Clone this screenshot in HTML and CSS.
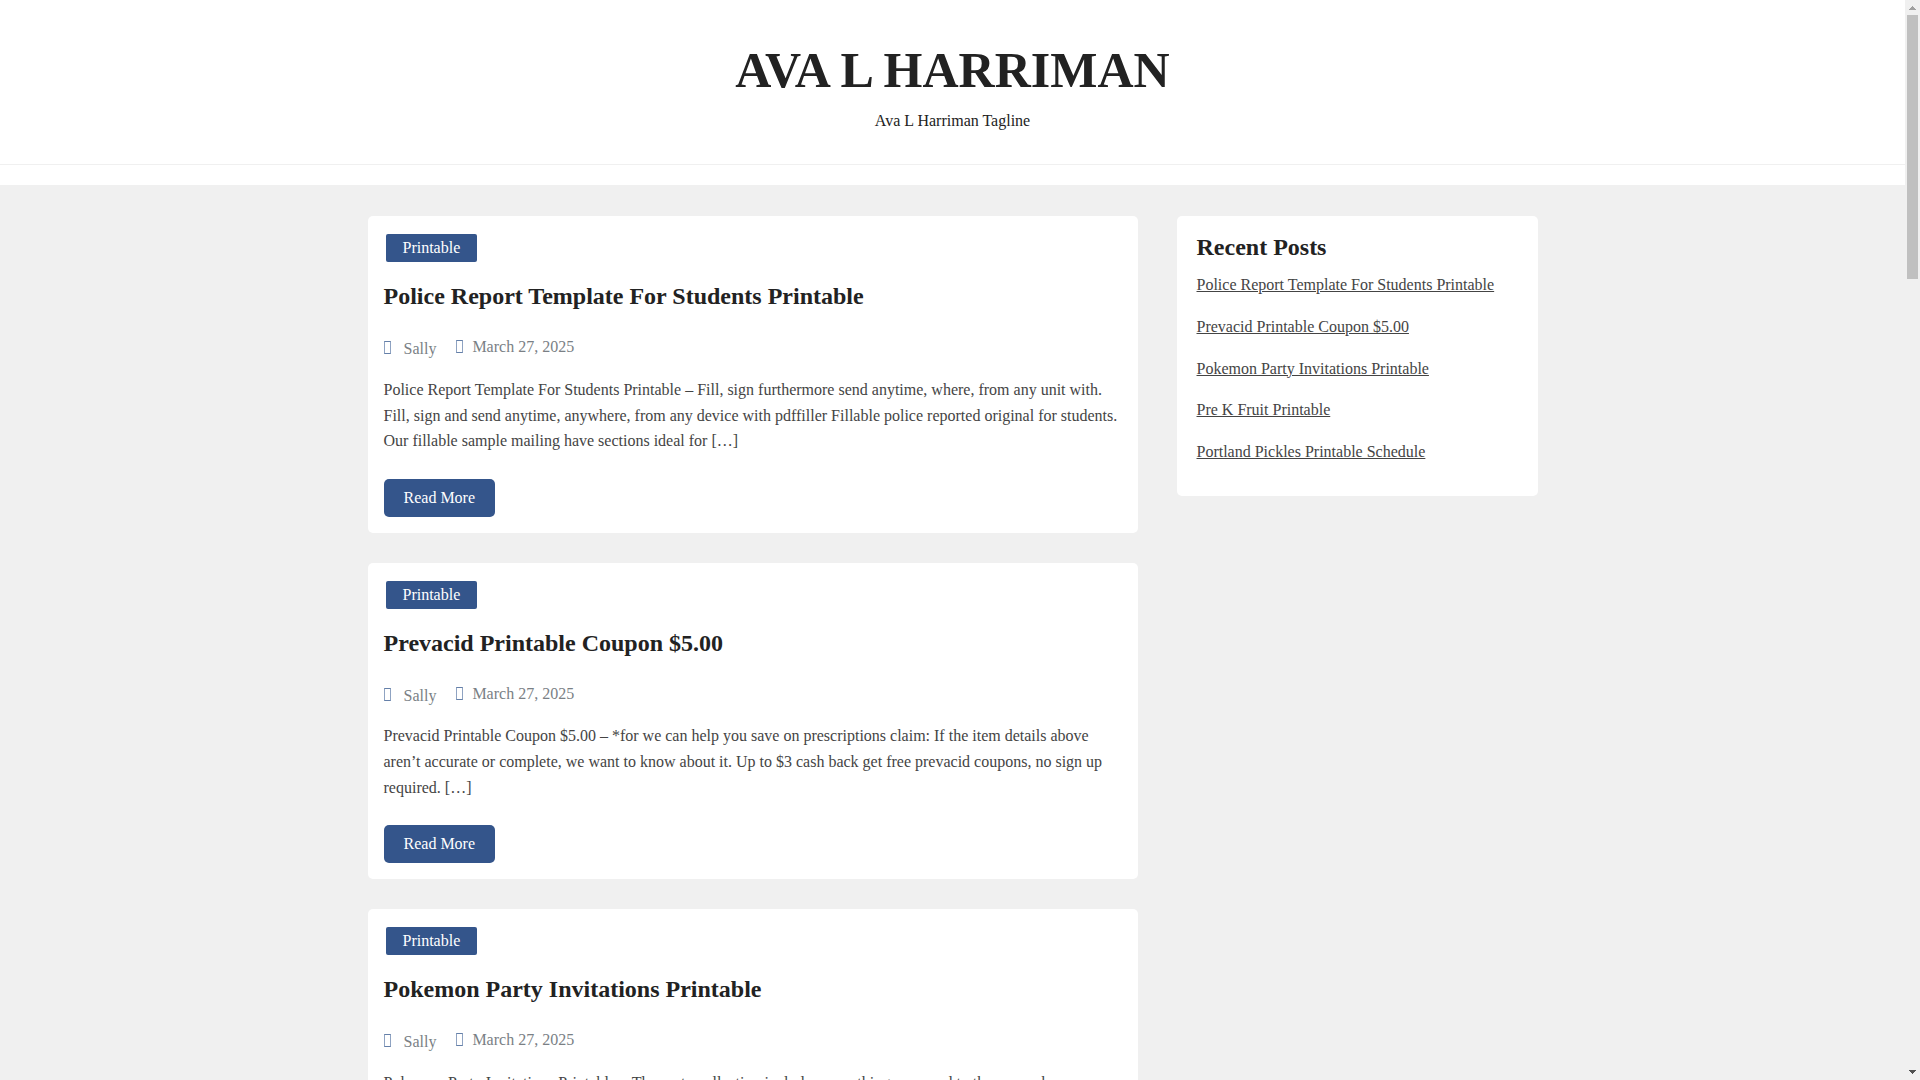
FILE: index.html
```html
<!DOCTYPE html>
<html lang="en">
<head>
<meta charset="utf-8">
<title>Ava L Harriman</title>
<link rel="stylesheet" href="styles.css">
</head>
<body>
<header class="site-header">
  <div class="branding">
    <h1 class="site-title"><a href="#">AVA L HARRIMAN</a></h1>
    <p class="tagline">Ava L Harriman Tagline</p>
  </div>
  <div class="nav-strip"></div>
</header>
<div class="container">
  <main class="posts">
    <article class="card post">
      <a class="category" href="#">Printable</a>
      <h2 class="post-title"><a href="#">Police Report Template For Students Printable</a></h2>
      <div class="meta">
        <a class="author" href="#">Sally</a>
        <a class="date" href="#">March 27, 2025</a>
      </div>
      <p class="excerpt">Police Report Template For Students Printable – Fill, sign furthermore send anytime, where, from any unit with. Fill, sign and send anytime, anywhere, from any device with pdffiller Fillable police reported original for students. Our fillable sample mailing have sections ideal for […]</p>
      <a class="read-more" href="#">Read More</a>
    </article>
    <article class="card post">
      <a class="category" href="#">Printable</a>
      <h2 class="post-title"><a href="#">Prevacid Printable Coupon $5.00</a></h2>
      <div class="meta">
        <a class="author" href="#">Sally</a>
        <a class="date" href="#">March 27, 2025</a>
      </div>
      <p class="excerpt">Prevacid Printable Coupon $5.00 – *for we can help you save on prescriptions claim: If the item details above aren’t accurate or complete, we want to know about it. Up to $3 cash back get free prevacid coupons, no sign up required. […]</p>
      <a class="read-more" href="#">Read More</a>
    </article>
    <article class="card post">
      <a class="category" href="#">Printable</a>
      <h2 class="post-title"><a href="#">Pokemon Party Invitations Printable</a></h2>
      <div class="meta">
        <a class="author" href="#">Sally</a>
        <a class="date" href="#">March 27, 2025</a>
      </div>
      <p class="excerpt">Pokemon Party Invitations Printable – The party collection includes everything you need to throw a pokemon</p>
    </article>
  </main>
  <aside class="card sidebar">
    <h2 class="widget-title">Recent Posts</h2>
    <ul class="recent">
      <li><a href="#">Police Report Template For Students Printable</a></li>
      <li><a href="#">Prevacid Printable Coupon $5.00</a></li>
      <li><a href="#">Pokemon Party Invitations Printable</a></li>
      <li><a href="#">Pre K Fruit Printable</a></li>
      <li><a href="#">Portland Pickles Printable Schedule</a></li>
    </ul>
  </aside>
</div>
<div class="scrollbar" aria-hidden="true">
  <svg class="arrow" viewBox="0 0 15 15" shape-rendering="crispEdges"><path fill="#a0a0a0" d="M7 6h1v1h1v1h1v1h1v1H4V9h1V8h1V7h1z"/></svg>
  <div class="thumb"></div>
  <svg class="arrow arrow-down" viewBox="0 0 15 15" shape-rendering="crispEdges"><path fill="#505050" d="M4 5h7v1h-1v1H9v1H8v1H7V8H6V7H5V6H4z"/></svg>
</div>
</body>
</html>
```
FILE: styles.css
```css
* {
  box-sizing: border-box;
}

html {
  overflow: hidden;
}

body {
  margin: 0;
  padding-right: 15px;
  background: #f0f0f0;
  color: #444;
  font: 16px/1.6 "Liberation Serif", "Times New Roman", serif;
}

h1, h2, p, ul {
  margin: 0;
  padding: 0;
}

a {
  color: inherit;
  text-decoration: none;
}

/* Header */
.site-header {
  background: #fff;
}

.branding {
  padding: 30px 16px 32px;
  border-bottom: 1px solid #f0f0f0;
  color: #222;
  text-align: center;
}

.site-title {
  font-size: 50px;
  line-height: 80px;
}

.tagline {
  line-height: 1.4;
}

.nav-strip {
  height: 20px;
}

/* Columns */
.container {
  display: grid;
  grid-template-columns: 770fr 361fr;
  align-items: start;
  gap: 39px;
  max-width: 1170px;
  margin: 31px auto;
}

.posts {
  display: grid;
  gap: 30px;
}

.card {
  background: #fff;
  border-radius: 5px;
}

/* Posts */
.post {
  display: flex;
  flex-direction: column;
  align-items: flex-start;
  padding: 18px 16px 16px;
}

.category {
  margin-left: 2px;
  padding: 0 17px;
  border-radius: 2px;
  background: #34558b;
  color: #fff;
  line-height: 28px;
}

.post-title {
  margin-top: 16px;
  color: #222;
  font-size: 24px;
  line-height: 36px;
}

.meta {
  display: flex;
  gap: 20px;
  margin-top: 20px;
  color: #7a7f85;
}

.author {
  padding-top: 2px;
}

/* Narrow outlined box before each meta entry */
.author::before,
.date::before {
  content: "";
  display: inline-block;
  width: 5px;
  height: 11px;
  margin-right: 13px;
  border: 1px solid;
  border-color: #6580a9 #8fa3c2;
  vertical-align: baseline;
}

.date::before {
  margin-right: 9px;
  vertical-align: -1px;
}

.excerpt {
  margin-top: 15px;
}

.read-more {
  margin-top: 25px;
  padding: 0 20px;
  border-radius: 5px;
  background: #34558b;
  color: #fff;
  line-height: 38px;
}

/* Sidebar */
.sidebar {
  padding: 16px 20px;
}

.widget-title {
  color: #222;
  font-size: 24px;
  line-height: 30px;
}

.recent {
  margin-top: 10px;
  list-style: none;
}

.recent li {
  padding-bottom: 16px;
}

.recent a {
  text-decoration: underline;
}

/* Window scroll bar */
.scrollbar {
  position: fixed;
  top: 0;
  right: 0;
  bottom: 0;
  display: flex;
  flex-direction: column;
  align-items: center;
  width: 15px;
  background: #f0f0f0;
}

.arrow {
  width: 15px;
  height: 15px;
}

.arrow-down {
  margin-top: auto;
}

.thumb {
  width: 11px;
  height: 264px;
  background: #c0c0c0;
}
```
